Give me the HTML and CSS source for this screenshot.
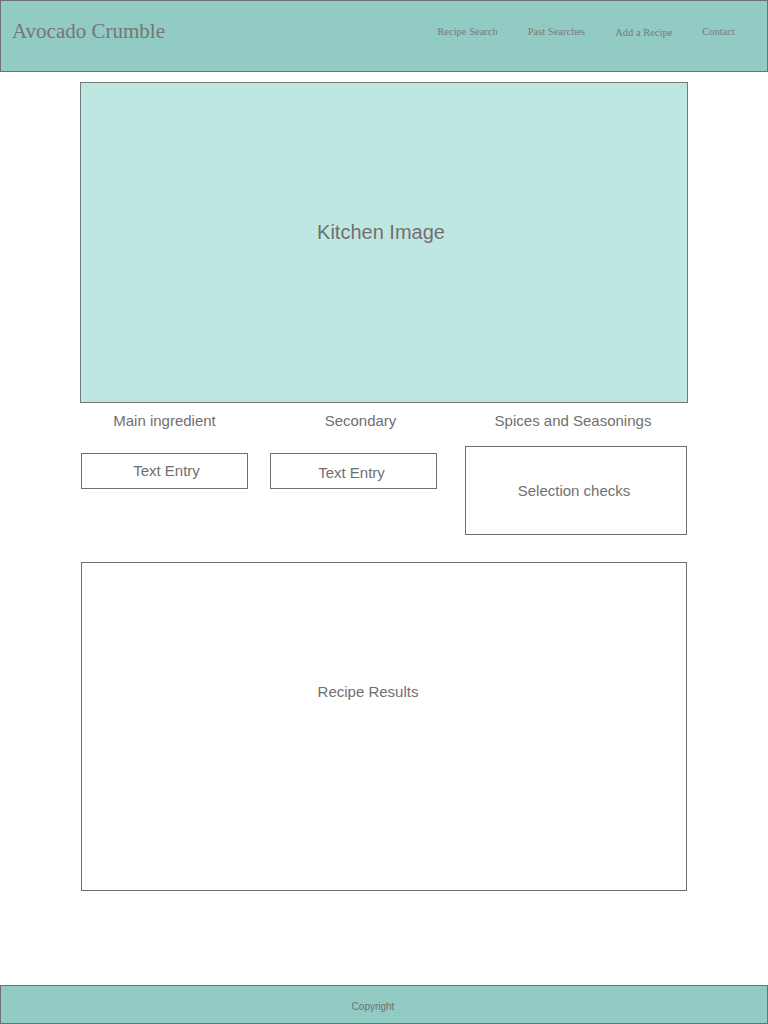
FILE: index.html
```html
<!DOCTYPE html>
<html lang="en">
<head>
  <meta charset="UTF-8" />
  <meta name="viewport" content="width=device-width, initial-scale=1.0"/>
  <title>Avocado Crumble - Recipe Search</title>
  <link rel="stylesheet" href="styles.css">
</head>
<body>
  <header class="site-header">
    <div class="brand">Avocado Crumble</div>
    <nav class="nav">
      <a href="#">Recipe Search</a>
      <a href="#">Past Searches</a>
      <a href="#" class="nav-low">Add a Recipe</a>
      <a href="#">Contact</a>
    </nav>
  </header>

  <main class="content">
    <div class="hero">Kitchen Image</div>

    <div class="search-grid">
      <div class="field-label">Main ingredient</div>
      <div class="field-label secondary">Secondary</div>
      <div class="field-label spices">Spices and Seasonings</div>

      <div class="entry">Text Entry</div>
      <div class="entry entry-low">Text Entry</div>
      <div class="checks spices">Selection checks</div>
    </div>

    <div class="results">Recipe Results</div>
  </main>

  <footer class="site-footer">Copyright</footer>
</body>
</html>
```

FILE: styles.css
```css
* {
  margin: 0;
  padding: 0;
  box-sizing: border-box;
}

body {
  font-family: 'Liberation Sans', Arial, sans-serif;
  color: #707070;
  background: #fff;
  min-height: 1024px;
  display: flex;
  flex-direction: column;
}

.site-header {
  height: 72px;
  background: #92cac4;
  border: 1px solid #707070;
  display: flex;
  align-items: center;
  justify-content: space-between;
  padding: 0 32px 10px 11px;
}

.brand {
  font-family: 'Liberation Serif', 'Times New Roman', serif;
  font-size: 21px;
  color: #757575;
}

.nav {
  display: flex;
  gap: 30px;
}

.nav a {
  font-family: 'Liberation Serif', 'Times New Roman', serif;
  font-size: 10.5px;
  color: #7a7a7a;
  text-decoration: none;
}

.nav a.nav-low {
  position: relative;
  top: 1px;
}

.content {
  width: 608px;
  margin: 10px 0 0 80px;
}

.hero {
  height: 321px;
  background: #bfe7e2;
  border: 1px solid #777;
  display: flex;
  align-items: center;
  justify-content: center;
  font-size: 20px;
  padding: 0 6px 20px 0;
}

.search-grid {
  display: grid;
  grid-template-columns: 167px 167px 228px;
  column-gap: 22px;
  row-gap: 16px;
  align-items: start;
  margin: 9px 0 0 1px;
}

.field-label {
  font-size: 15px;
  line-height: 18px;
  text-align: center;
}

.field-label.secondary {
  padding-left: 14px;
}

.field-label.spices {
  padding-right: 6px;
}

.spices {
  margin-left: 6px;
}

.entry {
  height: 36px;
  margin-top: 7px;
  border: 1px solid #707070;
  font-size: 15px;
  display: flex;
  align-items: center;
  justify-content: center;
  padding: 0 0 2px 4px;
}

.entry-low {
  padding: 2px 4px 0 0;
}

.checks {
  height: 89px;
  border: 1px solid #707070;
  font-size: 15px;
  display: flex;
  align-items: center;
  justify-content: center;
  padding-right: 4px;
}

.results {
  height: 329px;
  margin: 27px 0 0 1px;
  width: 606px;
  border: 1px solid #707070;
  font-size: 15px;
  display: flex;
  align-items: center;
  justify-content: center;
  padding: 0 32px 71px 0;
}

.site-footer {
  margin-top: auto;
  height: 39px;
  background: #92cac4;
  border: 1px solid #707070;
  display: flex;
  align-items: center;
  justify-content: center;
  font-size: 10px;
  padding: 4px 22px 0 0;
}
```
